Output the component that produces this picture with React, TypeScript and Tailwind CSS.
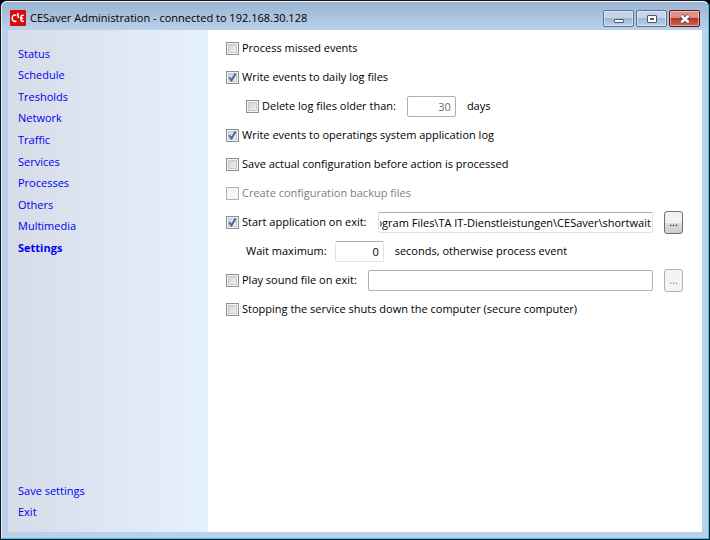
import React, { useEffect, useRef, useState } from "react";

const navItems = [
  "Status",
  "Schedule",
  "Tresholds",
  "Network",
  "Traffic",
  "Services",
  "Processes",
  "Others",
  "Multimedia",
  "Settings",
];

type CheckProps = {
  label: string;
  defaultChecked?: boolean;
  disabled?: boolean;
};

const Check = ({ label, defaultChecked, disabled }: CheckProps) => {
  return (
    <label
      className={`flex shrink-0 items-center gap-[3px] whitespace-nowrap ${
        disabled ? "text-[#808080]" : ""
      }`}
    >
      <span className="grid size-[13px] shrink-0">
        <input
          type="checkbox"
          defaultChecked={defaultChecked}
          disabled={disabled}
          className="peer col-start-1 row-start-1 size-[13px] appearance-none border border-[#8e8f8f] bg-linear-to-br from-[#cbcfd5] to-[#f6f6f6] shadow-[inset_0_0_0_1px_#f4f4f4,inset_0_0_0_2px_#c6cad0] disabled:border-[#b1b1b1] disabled:from-[#f6f6f6] disabled:shadow-none"
        />
        <svg
          viewBox="0 0 13 13"
          className="pointer-events-none invisible col-start-1 row-start-1 size-[13px] peer-checked:visible"
        >
          <path
            d="M3.3 6.2 L5.5 9.4 L9.6 2.6"
            fill="none"
            stroke="#4a65a8"
            strokeWidth="2"
          />
        </svg>
      </span>
      {label}
    </label>
  );
};

const Row = ({ children }: { children: React.ReactNode }) => {
  return <div className="flex h-[29px] items-center">{children}</div>;
};

const captionButton =
  "flex h-[17px] w-[31px] items-center justify-center rounded-[2px] border shadow-[inset_0_0_0_1px_rgba(255,255,255,0.45)]";
const blueButton =
  "border-[#5d7290] bg-linear-to-b from-[#c3d5e9] from-50% via-[#9fb9d5] via-50% to-[#b9d0e8]";

const TitleBar = () => {
  return (
    <header className="flex h-7 items-center pl-2 pr-2">
      <svg viewBox="0 0 16 16" className="mt-1 size-4 shrink-0">
        <rect width="16" height="16" rx="1" fill="#d60b12" />
        <g fill="none" stroke="#fff" strokeWidth="1.5">
          <path d="M6.4 5.4 C4 4.2 2.2 5.8 2.2 8.2 C2.2 10.6 4 12.2 6.4 11" />
          <path d="M7.8 3 L8.4 8.2" />
          <path d="M13.8 5.4 C11.8 4.6 10.8 5.8 10.8 8.2 C10.8 10.8 11.9 12 13.8 11 M10.8 8.2 H13.2" />
        </g>
      </svg>
      <h1 className="ml-1 mt-1 grow truncate text-[11px]">
        CESaver Administration - connected to 192.168.30.128
      </h1>
      <div className="flex gap-[2px] pt-[5px]">
        <button aria-label="Minimize" className={`${captionButton} ${blueButton}`}>
          <svg viewBox="0 0 12 10" className="h-[10px] w-3">
            <rect x="1.5" y="5.5" width="9" height="3" rx="0.5" fill="#fff" stroke="#535666" />
          </svg>
        </button>
        <button aria-label="Maximize" className={`${captionButton} ${blueButton}`}>
          <svg viewBox="0 0 12 10" className="h-[10px] w-3">
            <rect x="1.5" y="1.5" width="9" height="7" rx="0.5" fill="#fff" stroke="#535666" />
            <rect x="4.5" y="4.5" width="3" height="1" fill="#a9c0da" stroke="#535666" />
          </svg>
        </button>
        <button
          aria-label="Close"
          className={`${captionButton} border-[#5c1420] bg-linear-to-b from-[#dc9084] from-50% via-[#b93426] via-50% to-[#cf6450]`}
        >
          <svg viewBox="0 0 12 10" className="h-[10px] w-3">
            <path d="M2 1.5 L10 8.5 M10 1.5 L2 8.5" stroke="#535666" strokeWidth="4.2" />
            <path d="M2.3 1.6 L9.7 8.4 M9.7 1.6 L2.3 8.4" stroke="#fff" strokeWidth="2.6" />
          </svg>
        </button>
      </div>
    </header>
  );
};

const Sidebar = () => {
  return (
    <nav className="flex w-[200px] shrink-0 flex-col justify-between bg-linear-to-r from-[#d6dce8] to-[#e6f1fe] px-[10px] pb-[9px] pt-[13px] text-[11px] text-[#0000f0]">
      <ul className="grid h-54 grid-rows-10">
        {navItems.map((item) => (
          <li key={item} className="flex items-center">
            <a href="#" className={item === "Settings" ? "font-bold" : ""}>
              {item}
            </a>
          </li>
        ))}
      </ul>
      <ul>
        {["Save settings", "Exit"].map((item) => (
          <li key={item} className="flex h-[21px] items-center">
            <a href="#">{item}</a>
          </li>
        ))}
      </ul>
    </nav>
  );
};

const Settings = () => {
  const pathRef = useRef<HTMLInputElement>(null);
  const [path, setPath] = useState(
    "C:\\Program Files\\TA IT-Dienstleistungen\\CESaver\\shortwait"
  );

  // keep the end of the path in view
  useEffect(() => {
    if (pathRef.current) {
      pathRef.current.scrollLeft = pathRef.current.scrollWidth;
    }
  }, []);

  return (
    <main className="grow bg-white pl-[18px] pr-[19px] pt-1 text-[11px] text-black">
      <Row>
        <Check label="Process missed events" />
      </Row>
      <Row>
        <Check label="Write events to daily log files" defaultChecked />
      </Row>
      <Row>
        <div className="flex items-center pl-5">
          <Check label="Delete log files older than:" />
          <input
            type="text"
            aria-label="Days"
            defaultValue="30"
            disabled
            className="ml-[11px] h-[21px] w-[49px] rounded-[2px] border border-[#afafaf] bg-white px-1 text-right text-[#6d6d6d]"
          />
          <span className="ml-[11px]">days</span>
        </div>
      </Row>
      <Row>
        <Check label="Write events to operatings system application log" defaultChecked />
      </Row>
      <Row>
        <Check label="Save actual configuration before action is processed" />
      </Row>
      <Row>
        <Check label="Create configuration backup files" disabled />
      </Row>
      <Row>
        <Check label="Start application on exit:" defaultChecked />
        <input
          ref={pathRef}
          type="text"
          aria-label="Application"
          value={path}
          onChange={(e) => setPath(e.target.value)}
          className="ml-[11px] h-[21px] min-w-0 grow rounded-[2px] border border-[#e2e3ea] border-t-[#abadb3] bg-white px-px"
        />
        <button
          aria-label="Browse application"
          className="ml-[11px] h-[23px] w-[19px] shrink-0 rounded-[3px] border border-[#707070] bg-linear-to-b from-[#f2f2f2] from-50% via-[#dddddd] via-50% to-[#cfcfcf]"
        >
          ...
        </button>
      </Row>
      <Row>
        <label htmlFor="wait" className="pl-5">
          Wait maximum:
        </label>
        <input
          id="wait"
          type="text"
          defaultValue="0"
          className="ml-2 h-[21px] w-[49px] rounded-[2px] border border-[#e2e3ea] border-t-[#abadb3] bg-white px-1 text-right"
        />
        <span className="ml-[11px]">seconds, otherwise process event</span>
      </Row>
      <Row>
        <Check label="Play sound file on exit:" />
        <input
          type="text"
          aria-label="Sound file"
          disabled
          className="ml-[11px] h-[21px] min-w-0 grow rounded-[2px] border border-[#afafaf] bg-white px-px"
        />
        <button
          aria-label="Browse sound file"
          disabled
          className="ml-[11px] h-[23px] w-[19px] shrink-0 rounded-[3px] border border-[#adb2b5] bg-[#f4f4f4] text-[#838383]"
        >
          ...
        </button>
      </Row>
      <Row>
        <Check label="Stopping the service shuts down the computer (secure computer)" />
      </Row>
    </main>
  );
};

const App = () => {
  return (
    <div className="flex min-h-screen flex-col bg-black font-['Open_Sans','Noto_Sans',sans-serif]">
      <div className="flex grow flex-col overflow-hidden rounded-t-[7px] border border-[#16161c] bg-[#b9d1ea]">
        <div className="flex grow flex-col rounded-t-[6px] border border-b-[#20cfee] border-l-[#e4eef8] border-r-[#20cfee] border-t-[#f2f7fc] bg-linear-to-b from-[#9bb4d2] to-[#b9d1ea] to-[28px]">
          <TitleBar />
          <div className="flex grow px-[6px] pb-[6px]">
            <Sidebar />
            <Settings />
          </div>
        </div>
      </div>
    </div>
  );
};

export default App;
